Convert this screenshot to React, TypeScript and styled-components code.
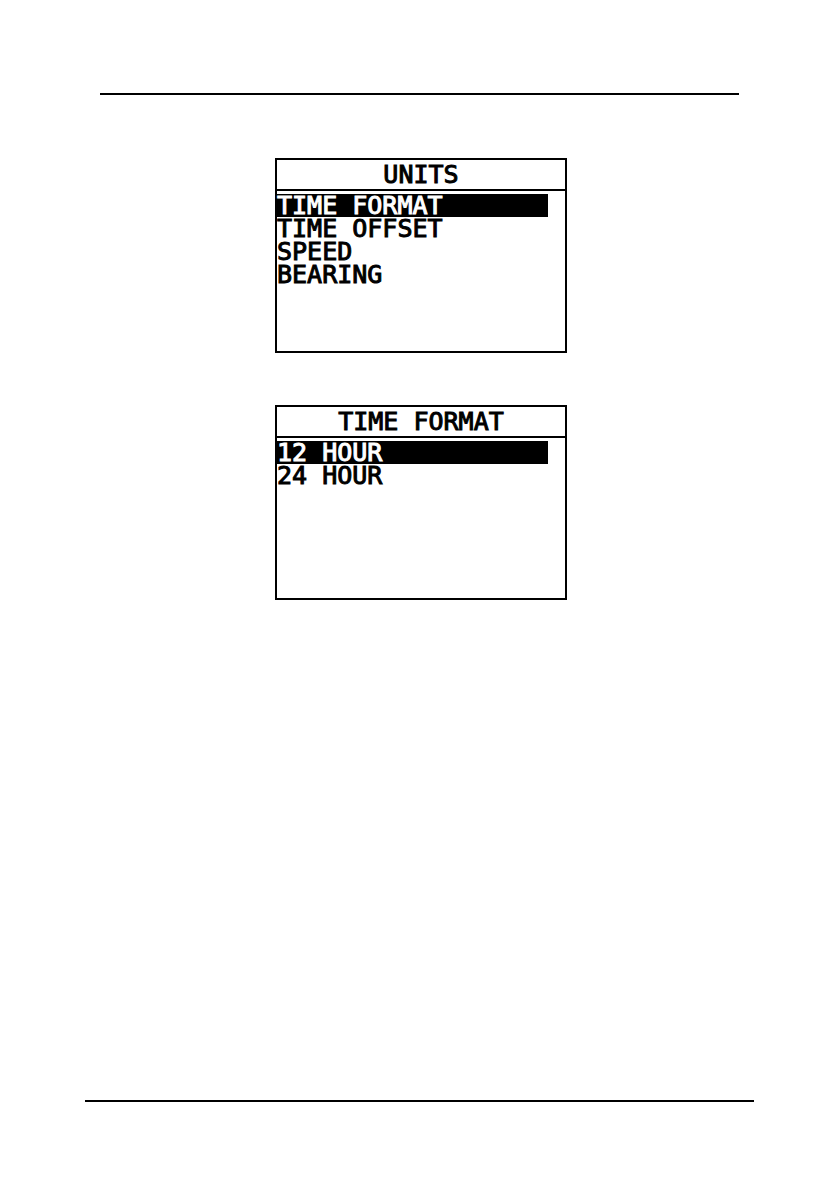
import React from "react";
import styled, { createGlobalStyle } from "styled-components";

const GlobalStyle = createGlobalStyle`
  * { box-sizing: border-box; }
  body { margin: 0; background: #fff; color: #000; }
`;

const Page = styled.div`
  min-height: 100vh;
  display: flex;
  flex-direction: column;
  padding: 93px 85px 89px;
`;

const Rule = styled.hr<{ $inset?: number }>`
  align-self: stretch;
  height: 2px;
  margin: 0 ${(p) => p.$inset ?? 0}px;
  border: 0;
  background: #000;
`;

const Screens = styled.main`
  flex: 1;
  display: flex;
  flex-direction: column;
  align-items: center;
  gap: 52px;
  padding: 63px 0 40px 3px;
`;

const Screen = styled.section`
  width: 100%;
  max-width: 292px;
  min-height: 195px;
  border: 2px solid #000;
  font-family: "DejaVu Sans Mono", "Liberation Mono", monospace;
  font-size: 25px;
  line-height: 23px;
  -webkit-text-stroke: 1px currentColor;
`;

const Title = styled.h2`
  margin: 0;
  padding: 3px 0;
  border-bottom: 2px solid #000;
  font: inherit;
  text-align: center;
`;

const Menu = styled.ul`
  list-style: none;
  margin: 3px 17px 0 0;
  padding: 0;
`;

const Item = styled.button<{ $active?: boolean }>`
  display: block;
  width: 100%;
  padding: 0;
  border: 0;
  font: inherit;
  text-align: left;
  white-space: nowrap;
  color: ${(p) => (p.$active ? "#fff" : "#000")};
  background: ${(p) => (p.$active ? "#000" : "transparent")};
`;

type MenuScreenProps = { title: string; items: string[] };

function MenuScreen({ title, items }: MenuScreenProps) {
  return (
    <Screen>
      <Title>{title}</Title>
      <Menu>
        {items.map((item, i) => (
          <li key={item}>
            <Item type="button" $active={i === 0}>{item}</Item>
          </li>
        ))}
      </Menu>
    </Screen>
  );
}

export default function App() {
  return (
    <Page>
      <GlobalStyle />
      <Rule $inset={15} />
      <Screens>
        <MenuScreen title="UNITS" items={["TIME FORMAT", "TIME OFFSET", "SPEED", "BEARING"]} />
        <MenuScreen title="TIME FORMAT" items={["12 HOUR", "24 HOUR"]} />
      </Screens>
      <Rule />
    </Page>
  );
}
